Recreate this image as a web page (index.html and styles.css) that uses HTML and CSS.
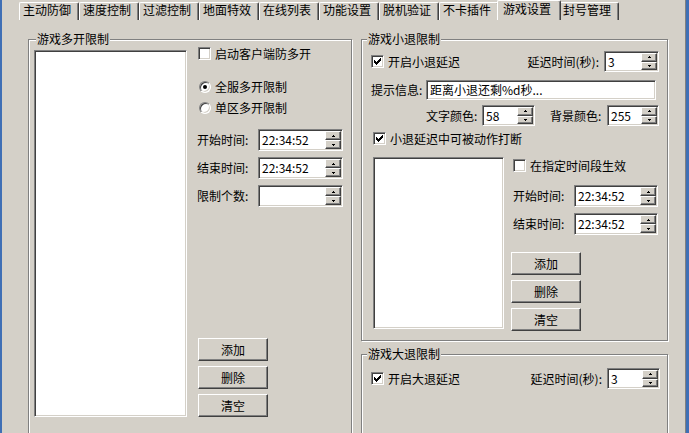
FILE: index.html
```html
<!DOCTYPE html>
<html lang="zh-CN">
<head>
    <meta charset="UTF-8">
    <title>游戏设置</title>
    <link rel="stylesheet" href="styles.css">
</head>
<body>
    <div class="window">
        <div class="tabs">
            <div class="tab">主动防御</div>
            <div class="tab">速度控制</div>
            <div class="tab">过滤控制</div>
            <div class="tab">地面特效</div>
            <div class="tab">在线列表</div>
            <div class="tab">功能设置</div>
            <div class="tab">脱机验证</div>
            <div class="tab">不卡插件</div>
            <div class="tab active">游戏设置</div>
            <div class="tab">封号管理</div>
        </div>

        <div class="pane">
            <!-- left: multi-open limit -->
            <fieldset class="group multi">
                <legend>游戏多开限制</legend>
                <div class="body">
                    <div class="listbox"></div>
                    <div class="opts">
                        <div class="check"><span class="box"></span>启动客户端防多开</div>
                        <div class="radio first"><span class="dot on"></span>全服多开限制</div>
                        <div class="radio"><span class="dot"></span>单区多开限制</div>
                        <div class="field first">
                            <span class="lbl">开始时间:</span>
                            <div class="spin time">
                                <span class="val">22:34:52</span>
                                <div class="arrows">
                                    <span><svg width="3" height="2"><path d="M1 0h1v1h1v1H0V1h1z"/></svg></span>
                                    <span><svg width="3" height="2"><path d="M0 0h3v1H2v1H1V1H0z"/></svg></span>
                                </div>
                            </div>
                        </div>
                        <div class="field">
                            <span class="lbl">结束时间:</span>
                            <div class="spin time">
                                <span class="val">22:34:52</span>
                                <div class="arrows">
                                    <span><svg width="3" height="2"><path d="M1 0h1v1h1v1H0V1h1z"/></svg></span>
                                    <span><svg width="3" height="2"><path d="M0 0h3v1H2v1H1V1H0z"/></svg></span>
                                </div>
                            </div>
                        </div>
                        <div class="field">
                            <span class="lbl">限制个数:</span>
                            <div class="spin time">
                                <span class="val"></span>
                                <div class="arrows">
                                    <span><svg width="3" height="2"><path d="M1 0h1v1h1v1H0V1h1z"/></svg></span>
                                    <span><svg width="3" height="2"><path d="M0 0h3v1H2v1H1V1H0z"/></svg></span>
                                </div>
                            </div>
                        </div>
                        <div class="buttons">
                            <div class="btn">添加</div>
                            <div class="btn">删除</div>
                            <div class="btn">清空</div>
                        </div>
                    </div>
                </div>
            </fieldset>

            <div class="side">
                <!-- small quit -->
                <fieldset class="group quit">
                    <legend>游戏小退限制</legend>
                    <div class="body">
                        <div class="row">
                            <div class="check"><span class="box"><svg width="11" height="11"><path d="M8 2h1v1h-1z M7 3h2v1h-2z M2 4h1v1h-1z M6 4h3v1h-3z M2 5h2v1h-2z M5 5h3v1h-3z M2 6h5v1h-5z M3 7h3v1h-3z M4 8h1v1h-1z"/></svg></span>开启小退延迟</div>
                            <div class="pair">
                                <span>延迟时间(秒):</span>
                                <div class="spin num delay">
                                    <span class="val">3</span>
                                    <div class="arrows">
                                        <span><svg width="3" height="2"><path d="M1 0h1v1h1v1H0V1h1z"/></svg></span>
                                        <span><svg width="3" height="2"><path d="M0 0h3v1H2v1H1V1H0z"/></svg></span>
                                    </div>
                                </div>
                            </div>
                        </div>
                        <div class="row tip">
                            <span class="tip-lbl">提示信息:</span>
                            <div class="text">距离小退还剩%d秒...</div>
                        </div>
                        <div class="row colors">
                            <span class="c-lbl">文字颜色:</span>
                            <div class="spin num fg">
                                <span class="val">58</span>
                                <div class="arrows">
                                    <span><svg width="3" height="2"><path d="M1 0h1v1h1v1H0V1h1z"/></svg></span>
                                    <span><svg width="3" height="2"><path d="M0 0h3v1H2v1H1V1H0z"/></svg></span>
                                </div>
                            </div>
                            <span class="c-lbl bg-lbl">背景颜色:</span>
                            <div class="spin num bg">
                                <span class="val">255</span>
                                <div class="arrows">
                                    <span><svg width="3" height="2"><path d="M1 0h1v1h1v1H0V1h1z"/></svg></span>
                                    <span><svg width="3" height="2"><path d="M0 0h3v1H2v1H1V1H0z"/></svg></span>
                                </div>
                            </div>
                        </div>
                        <div class="check interrupt"><span class="box"><svg width="11" height="11"><path d="M8 2h1v1h-1z M7 3h2v1h-2z M2 4h1v1h-1z M6 4h3v1h-3z M2 5h2v1h-2z M5 5h3v1h-3z M2 6h5v1h-5z M3 7h3v1h-3z M4 8h1v1h-1z"/></svg></span>小退延迟中可被动作打断</div>
                        <div class="lower">
                            <div class="listbox"></div>
                            <div class="lower-opts">
                                <div class="check"><span class="box"></span>在指定时间段生效</div>
                                <div class="field first">
                                    <span class="lbl">开始时间:</span>
                                    <div class="spin time">
                                        <span class="val">22:34:52</span>
                                        <div class="arrows">
                                            <span><svg width="3" height="2"><path d="M1 0h1v1h1v1H0V1h1z"/></svg></span>
                                            <span><svg width="3" height="2"><path d="M0 0h3v1H2v1H1V1H0z"/></svg></span>
                                        </div>
                                    </div>
                                </div>
                                <div class="field">
                                    <span class="lbl">结束时间:</span>
                                    <div class="spin time">
                                        <span class="val">22:34:52</span>
                                        <div class="arrows">
                                            <span><svg width="3" height="2"><path d="M1 0h1v1h1v1H0V1h1z"/></svg></span>
                                            <span><svg width="3" height="2"><path d="M0 0h3v1H2v1H1V1H0z"/></svg></span>
                                        </div>
                                    </div>
                                </div>
                                <div class="buttons">
                                    <div class="btn">添加</div>
                                    <div class="btn">删除</div>
                                    <div class="btn">清空</div>
                                </div>
                            </div>
                        </div>
                    </div>
                </fieldset>

                <!-- big quit -->
                <fieldset class="group bigquit">
                    <legend>游戏大退限制</legend>
                    <div class="body">
                        <div class="row">
                            <div class="check"><span class="box"><svg width="11" height="11"><path d="M8 2h1v1h-1z M7 3h2v1h-2z M2 4h1v1h-1z M6 4h3v1h-3z M2 5h2v1h-2z M5 5h3v1h-3z M2 6h5v1h-5z M3 7h3v1h-3z M4 8h1v1h-1z"/></svg></span>开启大退延迟</div>
                            <div class="pair">
                                <span>延迟时间(秒):</span>
                                <div class="spin num bg">
                                    <span class="val">3</span>
                                    <div class="arrows">
                                        <span><svg width="3" height="2"><path d="M1 0h1v1h1v1H0V1h1z"/></svg></span>
                                        <span><svg width="3" height="2"><path d="M0 0h3v1H2v1H1V1H0z"/></svg></span>
                                    </div>
                                </div>
                            </div>
                        </div>
                    </div>
                </fieldset>
            </div>
        </div>
    </div>
</body>
</html>
```

FILE: styles.css
```css
* {
    box-sizing: border-box;
}
body {
    margin: 0;
    font-family: "Noto Sans CJK SC", "Noto Sans", sans-serif;
    font-size: 12px;
    line-height: 14px;
    color: #000;
    background: #d4d0c8;
}
.window {
    width: 689px;
    height: 433px;
    overflow: hidden;
    background: #d4d0c8;
    border-left: 2px solid #3f6fb5;
    border-right: 3px solid #3f6fb5;
    box-shadow: inset -1px 0 #808080;
}

/* tab strip */
.tabs {
    display: flex;
    align-items: flex-end;
    height: 20px;
    padding-left: 17px;
}
.tab {
    width: 60px;
    height: 18px;
    padding: 0 0 0 3px;
    border-top: 1px solid #fff;
    border-left: 1px solid #fff;
    border-right: 1px solid #404040;
    border-radius: 2px 2px 0 0;
    box-shadow: inset -1px 0 #808080;
    white-space: nowrap;
}
.tab.active {
    position: relative;
    z-index: 1;
    width: 64px;
    height: 20px;
    margin: 0 -2px;
    padding: 1px 0 0 5px;
    background: #d4d0c8;
}

/* group boxes */
.pane {
    display: flex;
    align-items: flex-start;
    gap: 9px;
    padding: 14px 0 0 26px;
}
.group {
    margin: 0;
    padding: 0;
    min-width: 0;
    border: 1px solid #808080;
    box-shadow: 1px 1px 0 #fff, inset 1px 1px 0 #fff;
}
.group legend {
    margin-left: 7px;
    padding: 0 1px;
    line-height: 10px;
    background: #d4d0c8;
}
.side .group legend {
    margin-left: 5px;
}

/* sunken / raised bits */
.listbox, .box, .spin, .text, .dot {
    background: #fff;
    border: 1px solid;
    border-color: #808080 #fff #fff #808080;
    box-shadow: inset 1px 1px #404040, inset -1px -1px #d4d0c8;
}
.btn, .arrows span {
    background: #d4d0c8;
    border: 1px solid;
    border-color: #fff #404040 #404040 #fff;
    box-shadow: inset -1px -1px #808080;
}

.check {
    display: flex;
    align-items: center;
    gap: 4px;
    height: 15px;
    white-space: nowrap;
}
.box {
    flex: none;
    width: 13px;
    height: 13px;
}
.box svg {
    display: block;
}
.radio {
    display: flex;
    align-items: center;
    gap: 4px;
    height: 15px;
    margin: 6px 0 0 2px;
    white-space: nowrap;
}
.radio.first {
    margin-top: 18px;
}
.dot {
    flex: none;
    display: flex;
    align-items: center;
    justify-content: center;
    width: 12px;
    height: 12px;
    border-radius: 50%;
}
.dot.on::after {
    content: "";
    width: 4px;
    height: 4px;
    border-radius: 50%;
    background: #000;
}

.field {
    display: flex;
    align-items: center;
    margin-top: 6px;
}
.field.first {
    margin-top: 14px;
}
.lbl {
    width: 61px;
    white-space: nowrap;
}
.spin {
    display: flex;
    height: 22px;
    padding: 1px;
}
.spin.time {
    width: 85px;
}
.spin.num {
    height: 21px;
}
.val {
    flex: 1;
    display: flex;
    align-items: center;
    padding: 0 2px;
}
.arrows {
    display: flex;
    flex-direction: column;
    width: 16px;
}
.arrows span {
    flex: 1;
    display: flex;
    align-items: center;
    justify-content: center;
}
.arrows svg {
    display: block;
}
.text {
    display: flex;
    align-items: center;
    height: 20px;
    padding: 0 3px;
}

.btn {
    display: flex;
    align-items: center;
    justify-content: center;
    width: 70px;
    height: 23px;
}
.buttons {
    display: flex;
    flex-direction: column;
    gap: 5px;
    margin-left: 1px;
}

/* left group */
.multi {
    width: 324px;
    height: 420px;
}
.multi .body {
    display: flex;
    padding: 2px 0 0 5px;
}
.multi .listbox {
    width: 153px;
    height: 367px;
    margin-top: 4px;
}
.opts {
    display: flex;
    flex-direction: column;
    align-items: flex-start;
    height: 371px;
    margin-left: 10px;
}
.opts .check {
    margin-left: 1px;
}
.opts .buttons {
    margin-top: auto;
}

/* right column */
.side {
    display: flex;
    flex-direction: column;
    width: 307px;
}
.quit {
    height: 307px;
}
.quit .body {
    padding: 7px 8px 0 9px;
}
.row {
    display: flex;
    align-items: center;
    justify-content: space-between;
}
.pair {
    display: flex;
    align-items: center;
    gap: 5px;
}
.spin.delay {
    width: 55px;
}
.row.tip {
    justify-content: flex-start;
    margin-top: 8px;
}
.tip-lbl {
    width: 55px;
}
.text {
    width: 230px;
}
.row.colors {
    justify-content: flex-start;
    margin-top: 5px;
    padding-left: 55px;
}
.c-lbl {
    width: 56px;
}
.bg-lbl {
    width: 57px;
    margin-left: 15px;
}
.spin.fg {
    width: 53px;
}
.spin.bg {
    width: 52px;
}
.check.interrupt {
    margin: 5px 0 0 2px;
}
.lower {
    display: flex;
    margin-top: 11px;
}
.lower .listbox {
    width: 131px;
    height: 172px;
    margin-left: 2px;
}
.lower-opts {
    display: flex;
    flex-direction: column;
    align-items: flex-start;
    margin-left: 7px;
}
.lower-opts .check {
    margin: 1px 0 0 2px;
}
.lower-opts .field {
    margin-left: 2px;
}
.lower-opts .field.first {
    margin-top: 12px;
}
.lower-opts .spin.time {
    width: 84px;
}
.lower-opts .buttons {
    margin: 17px 0 0;
}

.bigquit {
    height: 100px;
    margin-top: 8px;
}
.bigquit .body {
    padding: 9px 7px 0 9px;
}
.bigquit .spin.bg {
    width: 53px;
}
```
